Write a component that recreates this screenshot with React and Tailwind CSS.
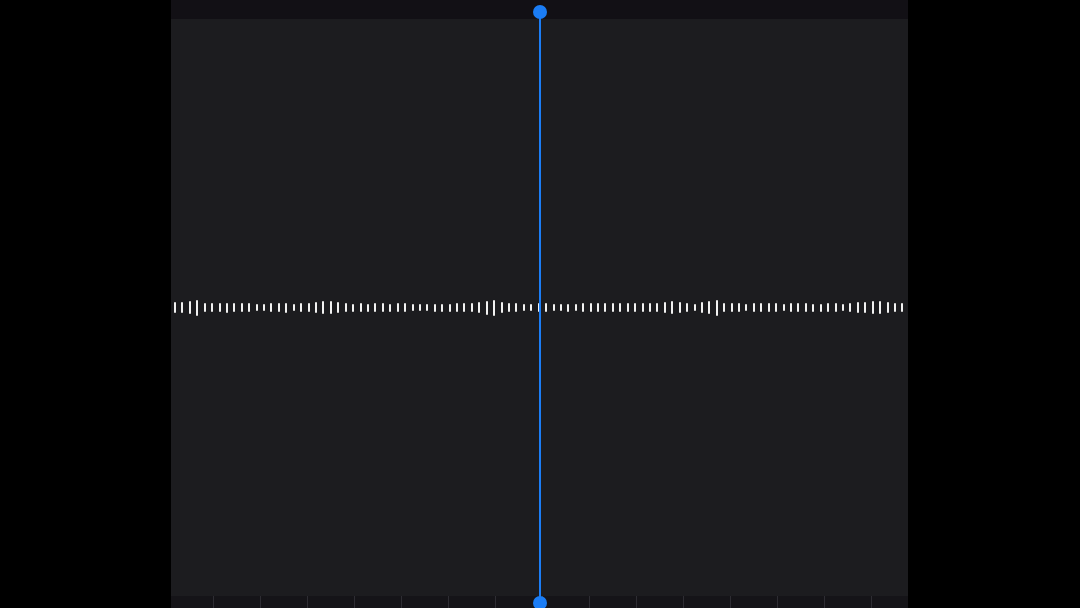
const heights = [
  10, 10, 12, 15, 8, 8, 8, 9, 8, 8, 8, 6, 6, 8, 8, 9,
  6, 8, 8, 10, 12, 12, 10, 8, 7, 8, 7, 8, 8, 7, 8, 8,
  6, 6, 6, 7, 7, 7, 8, 8, 8, 10, 13, 15, 10, 8, 8, 6, 6,
  8, 8, 6, 6, 7, 6, 8, 8, 8, 8, 8, 8, 8, 8, 8, 8,
  8, 10, 12, 10, 8, 6, 10, 12, 15, 8, 8, 8, 6, 8, 8, 8, 8,
  6, 8, 8, 8, 7, 7, 8, 8, 6, 8, 10, 10, 12, 12, 10, 8, 8,
];

const ticks = Array.from({ length: 15 });

const App = () => {
  return (
    <div className="w-[1080px] h-[608px] bg-black flex pl-[171px] overflow-hidden">
      <div className="relative w-[737px] h-full flex flex-col">
        {/* top strip */}
        <div className="h-[19px] bg-[#121015]"></div>

        {/* track */}
        <div className="flex-1 bg-[#1c1c1f] flex items-center pl-[3px] pr-[4px]">
          <div className="w-full flex items-center justify-between">
            {heights.map((h, i) => (
              <div
                key={i}
                className="w-[2px] rounded-[1px] bg-[#f2f2f2]"
                style={{ height: h + 1 }}
              ></div>
            ))}
          </div>
        </div>

        {/* ruler */}
        <div className="h-[12px] bg-[#151418] flex pl-[42px]">
          {ticks.map((_, i) => (
            <div key={i} className="w-[47px] h-full border-l border-[#2e2d33] shrink-0"></div>
          ))}
        </div>

        {/* playhead */}
        <div className="absolute top-[12px] bottom-[5px] left-[368px] w-[2px] bg-[#1b7df5]"></div>
        <div className="absolute top-[5px] left-[362px] w-[14px] h-[14px] rounded-full bg-[#1b7df5]"></div>
        <div className="absolute top-[596px] left-[362px] w-[14px] h-[14px] rounded-full bg-[#1b7df5]"></div>
      </div>
    </div>
  );
};

export default App;
